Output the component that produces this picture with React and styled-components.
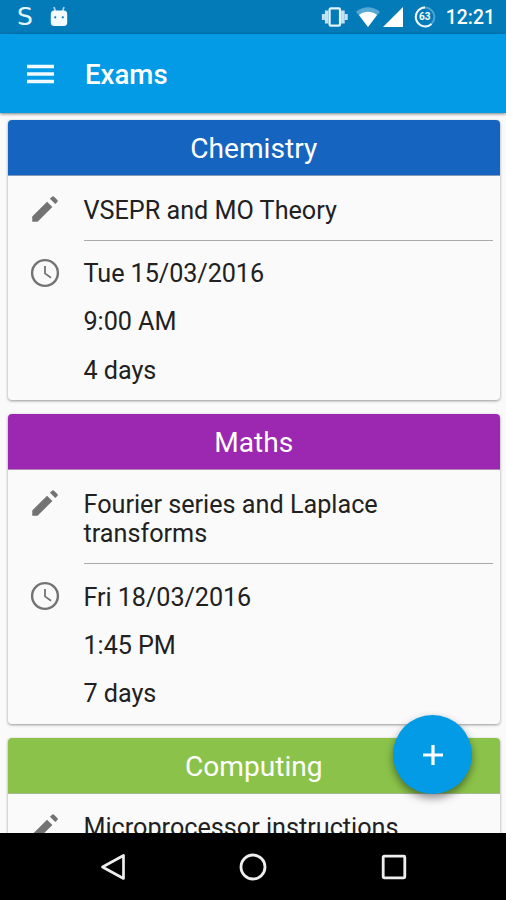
import React from 'react';
import styled, { createGlobalStyle } from 'styled-components';

const exams = [
    {
        subject: 'Chemistry',
        color: '#1565c0',
        topic: 'VSEPR and MO Theory',
        date: 'Tue 15/03/2016',
        time: '9:00 AM',
        remaining: '4 days',
    },
    {
        subject: 'Maths',
        color: '#9c27b0',
        topic: 'Fourier series and Laplace transforms',
        date: 'Fri 18/03/2016',
        time: '1:45 PM',
        remaining: '7 days',
    },
    {
        subject: 'Computing',
        color: '#8bc34a',
        topic: 'Microprocessor instructions',
    },
];

function StatusBar() {
    return (
        <Status>
            <Notifications>
                <Letter>S</Letter>
                <svg width="18" height="21" viewBox="0 0 18 21">
                    <path d="M4 1l1.6 5M14 1l-1.6 5" stroke="#a9d2ee" strokeWidth="1.7" />
                    <rect x="0.8" y="4.5" width="16.4" height="15.5" rx="3.5" fill="#f4fbff" />
                    <circle cx="5.2" cy="11.3" r="1.1" fill="#0279b5" />
                    <circle cx="12.8" cy="11.3" r="1.1" fill="#0279b5" />
                </svg>
            </Notifications>
            <SystemIcons>
                <svg width="28" height="22" viewBox="0 0 28 22">
                    <rect x="8.6" y="2.4" width="10.4" height="17.2" rx="1.2" fill="none" stroke="#e4f3fc" strokeWidth="2.2" />
                    <path d="M5.7 4.5v13M21.900 4.500v13" stroke="#c3e1f4" strokeWidth="3.600" />
                    <path d="M2.400 8v6M25.200 8v6" stroke="#c3e1f4" strokeWidth="3" />
                </svg>
                <svg width="24" height="20" viewBox="0 0 24 20">
                    <path d="M0 4.8C7-1.2 17-1.2 24 4.8L12 20z" fill="#55a9d4" />
                    <path d="M3 8C8.5 3.8 15.5 3.8 21 8L12 20z" fill="#fff" />
                </svg>
                <svg width="20" height="20" viewBox="0 0 20 20">
                    <path d="M20 0v20H0z" fill="#fff" />
                </svg>
                <Battery>
                    <svg width="22" height="22" viewBox="0 0 22 22">
                        <circle cx="11" cy="11" r="9.4" fill="none" stroke="#4ea5d1" strokeWidth="2" />
                        <path d="M17.5 18A9.4 9.4 0 1 1 11 1.6" fill="none" stroke="#f0f9ff" strokeWidth="2" />
                    </svg>
                    <span>63</span>
                </Battery>
                <Time>12:21</Time>
            </SystemIcons>
        </Status>
    )
}

function PencilIcon() {
    return (
        <svg viewBox="0 0 24 24" fill="currentColor">
            <path d="M3 17.25V21h3.75L17.200 10.550l-3.750-3.750zM20.710 7.040a1 1 0 0 0 0-1.410l-2.340-2.340a1 1 0 0 0-1.410 0L15.500 4.750l3.750 3.750z" />
        </svg>
    )
}

function ClockIcon() {
    return (
        <svg viewBox="0 0 34 34" fill="none" stroke="currentColor">
            <circle cx="17" cy="16" r="12.9" strokeWidth="2.4" />
            <path d="M17 9v7.4l6 4.3" strokeWidth="1.8" />
        </svg>
    )
}

function ExamCard({ exam }) {
    return (
        <Card>
            <CardHeader $color={exam.color}>{exam.subject}</CardHeader>
            <Row>
                <IconCell><PencilIcon /></IconCell>
                <Topic>{exam.topic}</Topic>
            </Row>
            {exam.date && (
                <Row>
                    <IconCell><ClockIcon /></IconCell>
                    <Details>
                        <span>{exam.date}</span>
                        <span>{exam.time}</span>
                        <span>{exam.remaining}</span>
                    </Details>
                </Row>
            )}
        </Card>
    )
}

function App() {
    return (
        <Screen>
            <GlobalStyle />
            <StatusBar />
            <Toolbar>
                <svg width="27" height="20" viewBox="0 0 27 20">
                    <path d="M0 2.500h27M0 10h27M0 17.500h27" stroke="#f2faff" strokeWidth="3.400" />
                </svg>
                <h1>Exams</h1>
            </Toolbar>
            <List>
                {exams.map((exam) => (
                    <ExamCard key={exam.subject} exam={exam} />
                ))}
            </List>
            <AddButton aria-label="Add exam">
                <svg width="20" height="20" viewBox="0 0 20 20">
                    <path d="M10 0v20M0 10h20" stroke="currentColor" strokeWidth="3.200" />
                </svg>
            </AddButton>
            <NavBar>
                <svg width="26" height="28" viewBox="0 0 26 28">
                    <path d="M23.5 2.5v23L2.5 14z" fill="none" stroke="#eee" strokeWidth="2.7" strokeLinejoin="round" />
                </svg>
                <svg width="28" height="28" viewBox="0 0 28 28">
                    <circle cx="14" cy="14" r="12" fill="none" stroke="#eee" strokeWidth="2.8" />
                </svg>
                <svg width="26" height="26" viewBox="0 0 26 26">
                    <rect x="2.2" y="2.2" width="21.6" height="21.6" rx="1" fill="none" stroke="#eee" strokeWidth="2.8" />
                </svg>
            </NavBar>
        </Screen>
    )
}

const GlobalStyle = createGlobalStyle`
    * {
        box-sizing: border-box;
    }
    body {
        margin: 0;
        font-family: Roboto, sans-serif;
    }
`;

const Screen = styled.div`
    position: relative;
    display: flex;
    flex-direction: column;
    width: 506px;
    height: 900px;
    overflow: hidden;
    background-color: #fafafa;
`;

const Status = styled.div`
    flex: none;
    display: flex;
    justify-content: space-between;
    height: 34px;
    padding: 0 11px 0 17px;
    background-color: #027bb8;
    color: #fff;
`;
const Notifications = styled.div`
    display: flex;
    align-items: center;
    gap: 16px;

    svg {
        margin-bottom: 1px;
    }
`;
const Letter = styled.span`
    width: 17px;
    font-family: 'DejaVu Sans', sans-serif;
    font-size: 25px;
    line-height: 34px;
    color: #e4f4fd;
`;
const SystemIcons = styled.div`
    display: flex;
    align-items: center;

    & > svg:nth-child(2) {
        margin: 0 3px 0 7px;
    }
`;
const Battery = styled.div`
    position: relative;
    width: 22px;
    height: 22px;
    margin: 0 10px 0 11px;

    span {
        position: absolute;
        inset: 0;
        text-align: center;
        font-size: 10px;
        font-weight: 700;
        line-height: 22px;
    }
`;
const Time = styled.span`
    font-size: 19.4px;
    font-weight: 500;
    line-height: 34px;
    padding-top: 2px;
`;

const Toolbar = styled.header`
    flex: none;
    display: flex;
    align-items: center;
    height: 79px;
    padding-left: 26.5px;
    background-color: #039be5;
    color: #fff;
    z-index: 1;
    box-shadow: 0 1px 3px rgba(0, 0, 0, 0.5);

    h1 {
        margin: 2px 0 0 31.5px;
        font-size: 27.6px;
        font-weight: 500;
        line-height: 33px;
    }
`;

const List = styled.main`
    flex: 1;
    min-height: 0;
    display: flex;
    flex-direction: column;
    gap: 14px;
    padding: 7px 6px 0 7.5px;
    overflow: hidden;
`;

const Card = styled.section`
    flex: none;
    padding-bottom: 14.8px;
    border-radius: 4px;
    background-color: #fafafa;
    box-shadow: 0 1px 3px rgba(0, 0, 0, 0.4);
`;
const CardHeader = styled.h2`
    height: 56px;
    margin: 0;
    border-bottom: 1px solid rgba(180, 180, 180, 0.7);
    border-radius: 4px 4px 0 0;
    background-color: ${({ $color }) => $color};
    color: #fff;
    text-align: center;
    font-size: 28.1px;
    font-weight: 400;
    line-height: 58px;
`;
const Row = styled.div`
    display: grid;
    grid-template-columns: 76px 1fr;
    padding-right: 7px;
    color: #212121;
    font-size: 25.2px;
    line-height: 29.6px;
`;
const IconCell = styled.div`
    padding: 16px 0 0 20.5px;

    svg {
        display: block;
        width: 34px;
        height: 34px;
        color: #737373;
    }
`;
const Topic = styled.div`
    padding: 19.8px 0 14.3px;
    border-bottom: 1px solid #aaa;
`;
const Details = styled.div`
    display: flex;
    flex-direction: column;
    gap: 18.5px;
    padding-top: 18.7px;
    letter-spacing: -0.06px;
`;

const AddButton = styled.button`
    position: absolute;
    right: 34px;
    bottom: 106px;
    display: flex;
    align-items: center;
    justify-content: center;
    width: 79px;
    height: 79px;
    padding: 0;
    border: none;
    border-radius: 50%;
    background-color: #039be5;
    color: #fff;
    box-shadow: 0 4px 8px rgba(0, 0, 0, 0.45);
`;

const NavBar = styled.nav`
    flex: none;
    display: flex;
    align-items: center;
    justify-content: center;
    gap: 113.5px;
    height: 67px;
    background-color: #000;
`;

export default App
